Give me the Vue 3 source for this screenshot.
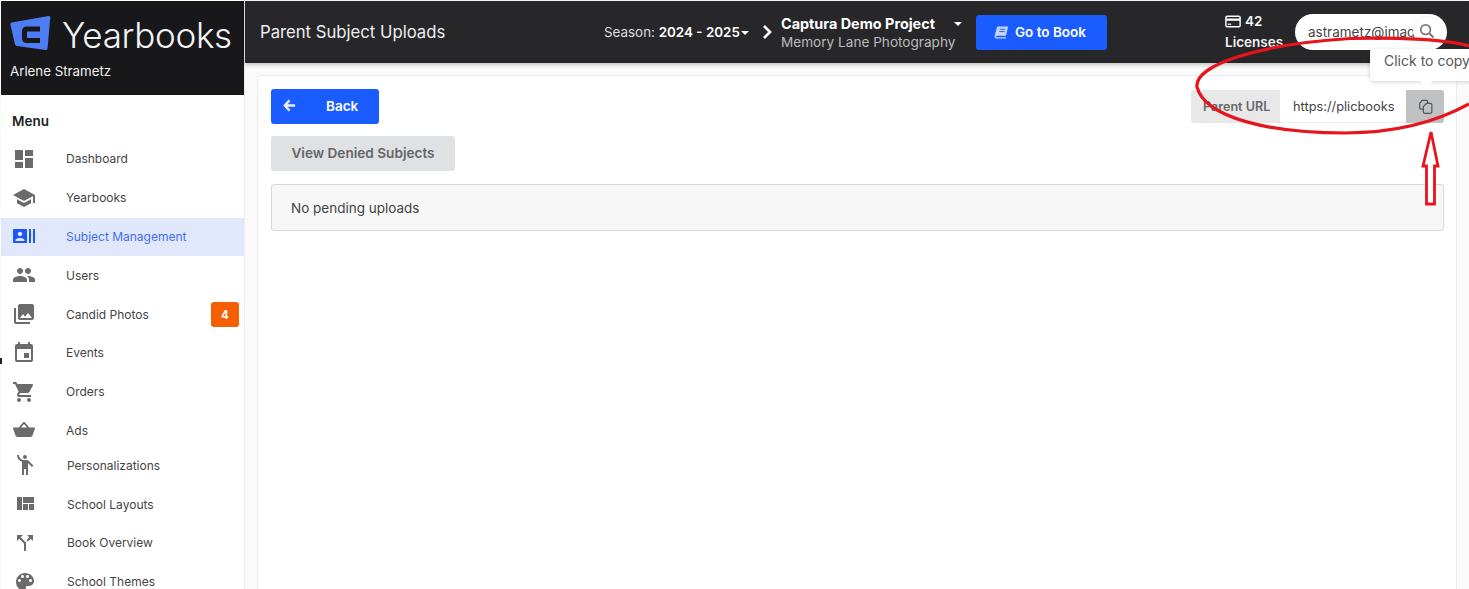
<script setup>
const topItems = [
  { label: 'Dashboard', vb: '0 0 24 24', d: 'M3 13h8V3H3v10zm0 8h8v-6H3v6zm10 0h8V11h-8v10zm0-18v6h8V3h-8z' },
  { label: 'Yearbooks', vb: '0 0 24 24', d: 'M5 13.18v4L12 21l7-3.82v-4L12 17l-7-3.82zM12 3L1 9l11 6 9-4.91V17h2V9L12 3z' },
  { label: 'Subject Management', active: true, vb: '0 0 24 24', d: 'M21 5v14h2V5h-2zm-4 14h2V5h-2v14zM14 5H2c-.55 0-1 .45-1 1v12c0 .55.45 1 1 1h12c.55 0 1-.45 1-1V6c0-.55-.45-1-1-1zM8 7.75c1.24 0 2.25 1.01 2.25 2.25S9.24 12.25 8 12.25 5.75 11.24 5.75 10 6.76 7.75 8 7.75zM12.5 17h-9v-.75c0-1.5 3-2.25 4.5-2.25s4.5.75 4.5 2.25V17z' },
  { label: 'Users', vb: '0 0 24 24', d: 'M16 11c1.66 0 2.99-1.34 2.99-3S17.66 5 16 5c-1.66 0-3 1.34-3 3s1.34 3 3 3zm-8 0c1.66 0 2.99-1.34 2.99-3S9.66 5 8 5C6.34 5 5 6.34 5 8s1.34 3 3 3zm0 2c-2.33 0-7 1.17-7 3.5V19h14v-2.5c0-2.33-4.67-3.5-7-3.5zm8 0c-.29 0-.62.02-.97.05 1.16.84 1.97 1.97 1.97 3.45V19h6v-2.5c0-2.33-4.67-3.5-7-3.5z' },
  { label: 'Candid Photos', badge: '4', vb: '0 0 24 24', d: 'M22 16V4c0-1.1-.9-2-2-2H8c-1.1 0-2 .9-2 2v12c0 1.1.9 2 2 2h12c1.1 0 2-.9 2-2zm-11-4l2.03 2.71L16 11l4 5H8l3-4zM2 6v14c0 1.1.9 2 2 2h14v-2H4V6H2z' },
  { label: 'Events', vb: '0 0 24 24', d: 'M17 12h-5v5h5v-5zM16 1v2H8V1H6v2H5c-1.11 0-1.99.9-1.99 2L3 19c0 1.1.89 2 2 2h14c1.1 0 2-.9 2-2V5c0-1.1-.9-2-2-2h-1V1h-2zm3 18H5V8h14v11z' },
  { label: 'Orders', vb: '0 0 24 24', d: 'M7 18c-1.1 0-1.99.9-1.99 2S5.9 22 7 22s2-.9 2-2-.9-2-2-2zM1 2v2h2l3.6 7.59-1.35 2.45c-.16.28-.25.61-.25.96 0 1.1.9 2 2 2h12v-2H7.42c-.14 0-.25-.11-.25-.25l.03-.12.9-1.63h7.45c.75 0 1.41-.41 1.75-1.03l3.58-6.49c.08-.14.12-.31.12-.48 0-.55-.45-1-1-1H5.21l-.94-2H1zm16 16c-1.1 0-1.99.9-1.99 2s.89 2 1.99 2 2-.9 2-2-.9-2-2-2z' },
  { label: 'Ads', wide: true, vb: '0 2 24 19', d: 'M17.21 9l-4.38-6.56c-.19-.28-.51-.42-.83-.42-.32 0-.64.14-.83.43L6.79 9H2c-.55 0-1 .45-1 1 0 .09.01.18.04.27l2.54 9.27c.23.84 1 1.46 1.92 1.46h13c.92 0 1.69-.62 1.93-1.46l2.54-9.27L23 10c0-.55-.45-1-1-1h-4.79zM9 9l3-4.4L15 9H9zm3 6c-1.4 0-2.5 1-2.5 3v3h5v-3c0-2-1.1-3-2.5-3z' }
]
const lowerItems = [
  { label: 'Personalizations', vb: '0 0 24 24', d: 'M12 2a2 2 0 1 0 0 4 2 2 0 0 0 0-4zM15.89 8.11C15.5 7.72 14.83 7 13.53 7h-2.54C8.24 6.99 6 4.75 6 2H4c0 3.16 2.11 5.84 5 6.71V22h2v-6h2v6h2V10.05L18.95 14l1.41-1.41-4.47-4.48z' },
  { label: 'School Layouts', vb: '0 0 24 24', d: 'M10 18h5v-6h-5v6zm-6 0h5V5H4v13zm12 0h5v-6h-5v6zM10 5v6h11V5H10z' },
  { label: 'Book Overview', vb: '0 0 24 24', d: 'M14 4l2.29 2.29-2.88 2.88 1.42 1.42 2.88-2.88L20 10V4zm-4 0H4v6l2.29-2.29 4.71 4.7V20h2v-8.41l-5.29-5.3z' },
  { label: 'School Themes', vb: '0 0 24 24', d: 'M12 3c-4.97 0-9 4.03-9 9s4.03 9 9 9c.83 0 1.5-.67 1.5-1.5 0-.39-.15-.74-.39-1.01-.23-.26-.38-.61-.38-.99 0-.83.67-1.5 1.5-1.5H16c2.76 0 5-2.24 5-5 0-4.42-4.03-8-9-8zm-5.5 9c-.83 0-1.5-.67-1.5-1.5S5.67 9 6.5 9 8 9.67 8 10.5 7.33 12 6.5 12zm3-4C8.67 8 8 7.33 8 6.5S8.67 5 9.5 5s1.5.67 1.5 1.5S10.33 8 9.5 8zm5 0c-.83 0-1.5-.67-1.5-1.5S13.67 5 14.5 5s1.5.67 1.5 1.5S15.33 8 14.5 8zm3 4c-.83 0-1.5-.67-1.5-1.5S16.67 9 17.5 9s1.5.67 1.5 1.5-.67 1.5-1.5 1.5z' }
]
</script>

<template>
  <div class="page">
    <aside class="side">
      <div class="brand">
        <div class="brand-row">
          <svg class="logo" viewBox="0 0 41 36">
            <path d="M1.5 7.5 L38.5 1 Q40.5 .8 40.3 2.8 L37.5 33.5 Q37.3 35.3 35.5 35 L7 31 Q5.2 30.7 4.9 29 L.4 9.5 Q.1 7.8 1.5 7.5 Z" fill="#4d7cf4" />
            <path d="M30 14 H17 Q14.5 14 14.5 16.5 V23 Q14.5 25.5 17 25.5 H30" fill="none" stroke="#18181b" stroke-width="5" />
          </svg>
          <span class="brand-name">Yearbooks</span>
        </div>
        <div class="brand-user">Arlene Strametz</div>
      </div>
      <div class="menu-title">Menu</div>
      <nav class="nav">
        <div v-for="item in topItems" :key="item.label" class="nav-item" :class="{ active: item.active }">
          <svg class="nav-icon" :class="{ wide: item.wide }" :viewBox="item.vb" preserveAspectRatio="none"><path :d="item.d" /></svg>
          <span>{{ item.label }}</span>
          <span v-if="item.badge" class="badge">{{ item.badge }}</span>
        </div>
      </nav>
      <nav class="nav lower">
        <div v-for="item in lowerItems" :key="item.label" class="nav-item">
          <svg class="nav-icon" :viewBox="item.vb"><path :d="item.d" /></svg>
          <span>{{ item.label }}</span>
        </div>
      </nav>
    </aside>

    <div class="main">
      <header class="top">
        <h1 class="title">Parent Subject Uploads</h1>
        <div class="season">Season: <b>2024 - 2025</b><i class="caret"></i></div>
        <svg class="chev" viewBox="0 0 12 16"><path d="M3 2l6 6-6 6" fill="none" stroke="#fff" stroke-width="2.6" /></svg>
        <div class="project">
          <div class="project-name"><b>Captura Demo Project</b><i class="caret"></i></div>
          <div class="project-sub">Memory Lane Photography</div>
        </div>
        <button class="btn-book">
          <svg viewBox="0 0 16 16" class="book"><path d="M4.5 1.5H15l-2.2 10H3.4c-1.2 0-1.6 1-1.3 1.5H13l-.3 1.5H2.5C1 14.5.4 13 .8 11.5L3 3c.2-1 .7-1.5 1.5-1.5z" fill="#c8d6fb" /><path d="M6 4.5h6M5.5 7h6" stroke="#1a5cff" /></svg>
          Go to Book
        </button>
        <div class="licenses">
          <div class="lic-top">
            <svg viewBox="0 0 18 14" class="card-ic"><rect x="1" y="1" width="16" height="12" rx="1.5" fill="none" stroke="#fff" stroke-width="1.6" /><rect x="1" y="3.6" width="16" height="2.6" fill="#fff" /><rect x="3" y="9.4" width="4" height="1.3" fill="#fff" /></svg>
            <b>42</b>
          </div>
          <b>Licenses</b>
        </div>
        <div class="search">
          <span class="search-text">astrametz@imag</span>
          <span class="search-btn">
            <svg viewBox="0 0 16 16" width="16" height="16"><circle cx="6.6" cy="6.6" r="4.8" fill="none" stroke="#7b7b7b" stroke-width="1.8" /><path d="M10.2 10.2L14.5 14.5" stroke="#7b7b7b" stroke-width="2" /></svg>
          </span>
        </div>
      </header>

      <section class="card">
        <div class="toolbar">
          <button class="btn-back">
            <svg viewBox="0 0 14 14" width="13" height="13"><path d="M7 1.5L2 7l5 5.5M2.5 7H13" fill="none" stroke="#e6edff" stroke-width="2.6" /></svg>
            <span>Back</span>
          </button>
          <div class="url-group">
            <span class="url-label">Parent URL</span>
            <span class="url-value">https://plicbooks</span>
            <span class="url-copy">
              <svg viewBox="0 0 16 16" width="17" height="17" fill="none" stroke="#555" stroke-width="1.15"><path d="M5.5 10.5H4a1.5 1.5 0 0 1-1.5-1.5V5L5 2.2h3.5A1.5 1.5 0 0 1 10 3.7V5" /><path d="M9 5h3.5A1.5 1.5 0 0 1 14 6.5V13a1.5 1.5 0 0 1-1.5 1.5H7.5A1.5 1.5 0 0 1 6 13V8z" /></svg>
            </span>
          </div>
        </div>
        <button class="btn-denied">View Denied Subjects</button>
        <div class="notice">No pending uploads</div>
      </section>

      <div class="tooltip">Click to copy</div>
    </div>

    <i class="speck"></i>

    <svg class="annot" viewBox="0 0 1469 589" width="1469" height="589">
      <path d="M1469 104 C1440 120 1400 133 1345 133 C1270 133 1205 118 1197 87 C1194 65 1260 44 1350 38.5 C1400 37 1450 40 1469 46" fill="none" stroke="#e8141c" stroke-width="3.2" />
      <path d="M1431 132 L1438 166 H1434.5 V204 H1426.5 V166 H1423 Z" fill="#fff" stroke="#e8141c" stroke-width="2.8" />
    </svg>
  </div>
</template>

<style>
html, body { margin: 0; background: #fff; }
</style>

<style scoped>
.page {
  position: relative;
  width: 1469px;
  height: 589px;
  overflow: hidden;
  display: flex;
  font-family: Inter, "Liberation Sans", sans-serif;
  color: #333;
  background: #fafafa;
}
.side {
  width: 243px;
  margin-left: 1px;
  flex: none;
  background: #fff;
  border-right: 1px solid #ececec;
}
.brand {
  height: 94px;
  margin-top: 1px;
  background: #18181b;
  box-sizing: border-box;
  padding: 14px 0 0 9px;
  color: #fff;
}
.brand-row { display: flex; align-items: center; gap: 11px; height: 40px; }
.logo { width: 41px; height: 36px; flex: none; align-self: flex-start; }
.brand-name { font-size: 35px; font-weight: 300; letter-spacing: -0.3px; color: #f4f4f5; }
.brand-user { font-size: 13.3px; margin-top: 8px; color: #f0f0f0; }
.menu-title {
  font-size: 13.5px;
  font-weight: 600;
  color: #222;
  padding: 18px 0 0 11px;
  height: 27px;
}
.nav { display: flex; flex-direction: column; }
.nav-item {
  height: 38.8px;
  box-sizing: border-box;
  padding-bottom: 1px;
  display: flex;
  align-items: center;
  font-size: 12px;
  color: #444;
  position: relative;
}
.nav-item.active { background: #e1e8fb; color: #3f6ff0; }
.nav-icon {
  width: 24px;
  height: 24px;
  margin: 0 30px 0 11px;
  fill: #6b6b6b;
  flex: none;
}
.nav-icon.wide { height: 15px; margin-top: -2px; }
.nav-item.active .nav-icon { fill: #1d57f5; }
.nav.lower { margin-top: -4px; padding-left: 1px; }
.badge {
  position: absolute;
  right: 5px;
  top: 7px;
  width: 28px;
  height: 25px;
  border-radius: 3px;
  background: #f55f00;
  color: #fff;
  font-size: 11.5px;
  font-weight: 700;
  display: flex;
  align-items: center;
  justify-content: center;
}
.main { flex: 1; min-width: 0; display: flex; flex-direction: column; position: relative; }
.top {
  height: 62px;
  margin-top: 1px;
  background: #27272a;
  display: flex;
  align-items: center;
  color: #fff;
  box-shadow: 0 2px 4px rgba(0, 0, 0, .22);
  flex: none;
  position: relative;
}
.title { font-size: 16.7px; font-weight: 400; margin: 0 0 0 15px; width: 344px; flex: none; color: #eee; white-space: nowrap; }
.season { font-size: 13.4px; color: #ddd; width: 157px; flex: none; white-space: nowrap; }
.season b { color: #fff; font-weight: 600; }
.caret {
  display: inline-block;
  border: 4px solid transparent;
  border-top-color: #fff;
  border-bottom: 0;
  margin-left: 1px;
  vertical-align: 2px;
}
.chev { width: 12px; height: 16px; flex: none; margin: 0 8px 0 0; }
.project { width: 186px; flex: none; line-height: 18px; padding-top: 2px; }
.project-name { display: flex; align-items: center; justify-content: space-between; padding-right: 5px; }
.project-name b { font-weight: 700; font-size: 14.4px; white-space: nowrap; }
.project-sub { color: #bbb; font-size: 13.6px; white-space: nowrap; }
.btn-book {
  margin-left: 9px;
  width: 131px;
  height: 35px;
  border: 0;
  border-radius: 3px;
  background: #1a5cff;
  color: #fff;
  font: 600 13.5px Inter, "Liberation Sans", sans-serif;
  display: flex;
  align-items: center;
  justify-content: center;
  gap: 6px;
  flex: none;
}
.book { width: 15px; height: 15px; margin-left: -3px; }
.licenses { margin-left: 118px; width: 70px; flex: none; font-size: 13.5px; line-height: 21px; color: #f3f3f3; }
.licenses b { font-weight: 600; }
.lic-top { display: flex; align-items: center; gap: 4px; }
.card-ic { width: 16px; height: 13px; }
.search {
  width: 152px;
  height: 36px;
  flex: none;
  background: #fff;
  border-radius: 18px;
  position: relative;
  display: flex;
  align-items: center;
  box-sizing: border-box;
  padding-left: 13px;
}
.search-text { white-space: nowrap; color: #444; font-size: 13.5px; }
.search-btn {
  position: absolute;
  right: 6px;
  top: 3px;
  width: 28px;
  height: 28px;
  border-radius: 50%;
  display: flex;
  align-items: center;
  justify-content: center;
  background: #fff;
  box-shadow: 0 0 2px rgba(0,0,0,.12);
}
.card {
  margin: 12px 12px -6px 12px;
  flex: 1;
  background: #fff;
  border: 1px solid #ececec;
  border-radius: 3px;
  padding: 13px 12px 0 13px;
}
.toolbar { display: flex; justify-content: space-between; align-items: flex-start; height: 47px; }
.btn-back {
  width: 108px;
  height: 35px;
  background: #1a5cff;
  border: 0;
  border-radius: 3px;
  color: #fff;
  font: 600 13.5px Inter, "Liberation Sans", sans-serif;
  padding: 0 0 2px 12px;
  display: flex;
  align-items: center;
  gap: 30px;
}
.url-group { display: flex; height: 33px; margin-top: 1px; font-size: 12.8px; border-radius: 3px; overflow: hidden; }
.url-label {
  width: 89px;
  box-sizing: border-box;
  background: #e8e8e8;
  color: #666;
  font-weight: 600;
  font-size: 12.6px;
  padding-left: 12px;
  display: flex;
  align-items: center;
}
.url-value {
  width: 126px;
  box-sizing: border-box;
  padding: 0 12px 0 13px;
  line-height: 33px;
  white-space: nowrap;
  color: #444;
  border-bottom: 1px solid #eee;
}
.url-copy {
  width: 38px;
  background: #c0c1c3;
  display: flex;
  align-items: center;
  justify-content: center;
}
.btn-denied {
  display: block;
  width: 184px;
  height: 35px;
  background: #e0e1e3;
  color: #666;
  border: 0;
  border-radius: 3px;
  padding: 0 0 2px;
  font: 600 13.6px Inter, "Liberation Sans", sans-serif;
}
.notice {
  margin-top: 13px;
  height: 47px;
  box-sizing: border-box;
  background: #f7f7f7;
  border: 1px solid #d8d8d8;
  border-radius: 3px;
  padding-left: 19px;
  display: flex;
  align-items: center;
  font-size: 13.5px;
  color: #444;
}
.tooltip {
  position: absolute;
  left: 1125px;
  top: 49px;
  width: 120px;
  height: 32px;
  box-sizing: border-box;
  background: #fff;
  padding: 3px 0 0 14px;
  font-size: 14px;
  color: #555;
  box-shadow: 0 1px 4px rgba(0,0,0,.18);
  border-radius: 3px;
  white-space: nowrap;
}
.tooltip::after {
  content: "";
  position: absolute;
  left: 52px;
  bottom: -5px;
  width: 9px;
  height: 9px;
  background: #fff;
  transform: rotate(45deg);
}
.speck { position: absolute; left: 0; top: 358px; width: 2px; height: 6px; background: #222; }
.annot { position: absolute; left: 0; top: 0; pointer-events: none; }
</style>
